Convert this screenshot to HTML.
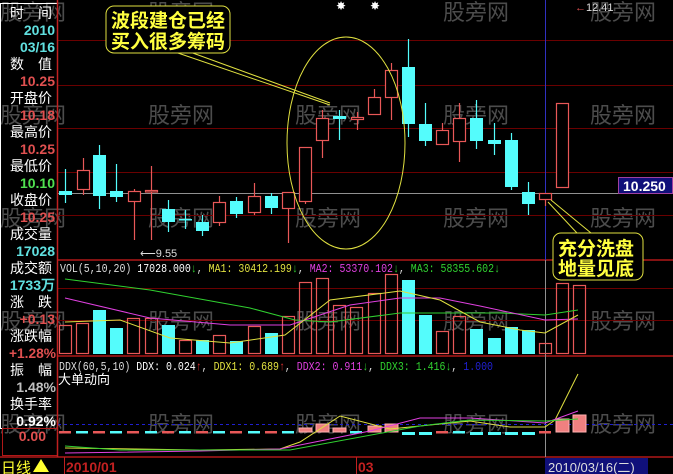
<!DOCTYPE html>
<html><head><meta charset="utf-8"><style>
html,body{margin:0;padding:0;background:#000;width:673px;height:474px;overflow:hidden}
svg{display:block}
.lab{font-family:"Liberation Sans","Noto Sans CJK SC",sans-serif;font-size:14px;fill:#fff}
.num{font-family:"Liberation Sans",sans-serif;font-size:14px;font-weight:bold;text-anchor:end}
.wm{font-family:"Noto Sans CJK SC",sans-serif;font-size:22px;fill:#5a5a5a;opacity:.85}
.mono{font-family:"Liberation Mono",monospace;font-size:12px}
.bb{font-family:"Noto Sans CJK SC",sans-serif;font-size:19px;font-weight:bold;fill:#ffff40}
</style></head><body>
<svg width="673" height="474" viewBox="0 0 673 474" xmlns="http://www.w3.org/2000/svg">
<rect width="673" height="474" fill="#000"/>
<g class="wm">
<text x="0" y="20">股旁网</text><text x="148" y="20">股旁网</text><text x="443" y="20">股旁网</text><text x="590" y="20">股旁网</text>
<text x="0" y="123">股旁网</text><text x="148" y="123">股旁网</text><text x="295" y="123">股旁网</text><text x="443" y="123">股旁网</text><text x="590" y="123">股旁网</text>
<text x="0" y="226">股旁网</text><text x="148" y="226">股旁网</text><text x="295" y="226">股旁网</text><text x="443" y="226">股旁网</text><text x="590" y="226">股旁网</text>
<text x="0" y="329">股旁网</text><text x="148" y="329">股旁网</text><text x="295" y="329">股旁网</text><text x="443" y="329">股旁网</text><text x="590" y="329">股旁网</text>
<text x="0" y="432">股旁网</text><text x="148" y="432">股旁网</text><text x="295" y="432">股旁网</text><text x="443" y="432">股旁网</text><text x="590" y="432">股旁网</text>
</g>
<g stroke="#6a0000" stroke-width="1">
<line x1="58" y1="40.5" x2="673" y2="40.5"/><line x1="58" y1="85.5" x2="673" y2="85.5"/>
<line x1="58" y1="128.5" x2="673" y2="128.5"/><line x1="58" y1="172.5" x2="673" y2="172.5"/>
<line x1="58" y1="215.5" x2="673" y2="215.5"/>
<line x1="58" y1="288.5" x2="673" y2="288.5"/>
<line x1="58" y1="320.5" x2="673" y2="320.5"/>
</g>
<g stroke="#b01818" stroke-width="1.5">
<line x1="58" y1="260" x2="673" y2="260"/><line x1="58" y1="356" x2="673" y2="356"/>
<line x1="0" y1="457" x2="673" y2="457"/>
</g>
<line x1="58" y1="193.5" x2="673" y2="193.5" stroke="#909090"/>
<line x1="545.5" y1="0" x2="545.5" y2="260" stroke="#3030c0"/>
<line x1="545.5" y1="260" x2="545.5" y2="457" stroke="#909090"/>
<line x1="58" y1="424.5" x2="673" y2="424.5" stroke="#2020d0" stroke-dasharray="3,3"/>
<rect x="0.5" y="3.5" width="57" height="425" fill="none" stroke="#fff"/>
<rect x="2.5" y="428.5" width="55" height="27" fill="none" stroke="#b01818"/>
<line x1="57.5" y1="0" x2="57.5" y2="457" stroke="#c02020" stroke-width="1.5"/>
<g class="lab">
<text x="10" y="18">时　间</text><text x="10" y="69">数　值</text><text x="10" y="103">开盘价</text>
<text x="10" y="137">最高价</text><text x="10" y="171">最低价</text><text x="10" y="205">收盘价</text>
<text x="10" y="239">成交量</text><text x="10" y="273">成交额</text><text x="10" y="307">涨　跌</text>
<text x="10" y="341">涨跌幅</text><text x="10" y="375">振　幅</text><text x="10" y="409">换手率</text>
</g>
<g class="num">
<text x="55" y="35" fill="#60e0e0">2010</text><text x="55" y="52" fill="#60e0e0">03/16</text>
<text x="55" y="86" fill="#e05050">10.25</text><text x="55" y="120" fill="#e05050">10.18</text>
<text x="55" y="154" fill="#e05050">10.25</text><text x="55" y="188" fill="#50e050">10.10</text>
<text x="55" y="222" fill="#e05050">10.25</text><text x="55" y="256" fill="#60e0e0">17028</text>
<text x="55" y="290" fill="#60e0e0">1733万</text><text x="55" y="324" fill="#e05050">+0.13</text>
<text x="56" y="358" fill="#e05050" textLength="47" lengthAdjust="spacingAndGlyphs">+1.28%</text><text x="56" y="392" fill="#c0c0c0">1.48%</text>
<text x="56" y="426" fill="#fff">0.92%</text><text x="46" y="441" fill="#e05050">0.00</text>
</g>
<g id="c" stroke-width="1.2"></g>
<g id="v" stroke-width="1.2"></g>
<polyline fill="none" stroke="#30d030" points="65,279 150,290 250,308 295,320 330,322 400,313 500,313 545,315 578,310"/>
<polyline fill="none" stroke="#e040e0" points="65,298 150,318 230,325 290,325 350,305 400,298 440,298 480,306 545,320 578,319"/>
<polyline fill="none" stroke="#e0e040" points="65,322 120,320 170,338 230,343 285,335 330,300 400,291 440,300 480,322 520,330 545,333 578,315"/>
<g id="d"></g>
<polyline fill="none" stroke="#e0e040" points="65,448 200,450 280,449 300,442 340,416 390,429 470,421 510,427 545,427 555,420 578,374"/>
<polyline fill="none" stroke="#e040e0" points="65,453 200,451 280,449 370,431 420,418 470,418 545,423 578,411"/>
<polyline fill="none" stroke="#30d030" points="65,446 120,450 290,450 420,426 470,420 545,421 578,419"/>
<text class="mono" x="60" y="272" fill="#ddd" textLength="440" lengthAdjust="spacingAndGlyphs">VOL(5,10,20) <tspan fill="#fff">17028.000</tspan><tspan fill="#30d030">↓</tspan>, <tspan fill="#e0e040">MA1: 30412.199</tspan><tspan fill="#30d030">↓</tspan>, <tspan fill="#e040e0">MA2: 53370.102</tspan><tspan fill="#30d030">↓</tspan>, <tspan fill="#30d030">MA3: 58355.602↓</tspan></text>
<text class="mono" x="59" y="370" fill="#ddd" textLength="434" lengthAdjust="spacingAndGlyphs">DDX(60,5,10) <tspan fill="#fff">DDX: 0.024</tspan><tspan fill="#e03030">↑</tspan>, <tspan fill="#e0e040">DDX1: 0.689</tspan><tspan fill="#e03030">↑</tspan>, <tspan fill="#e040e0">DDX2: 0.911</tspan><tspan fill="#30d030">↓</tspan>, <tspan fill="#30d030">DDX3: 1.416↓</tspan>, <tspan fill="#2020d0">1.000</tspan></text>
<text x="58" y="384" fill="#fff" style="font-family:'Noto Sans CJK SC',sans-serif;font-size:13px">大单动向</text>
<text x="140" y="257" fill="#ddd" style="font-family:'Liberation Sans',sans-serif;font-size:11px">⟵9.55</text>
<text x="575" y="11" fill="#ddd" style="font-family:'Liberation Sans',sans-serif;font-size:11px"><tspan fill="#e05050">←</tspan>12.41</text>
<text x="336" y="10" fill="#fff" font-size="12">✸</text><text x="370" y="10" fill="#fff" font-size="12">✸</text>
<rect x="618.5" y="177.5" width="54" height="16" fill="#10107a" stroke="#a040a0"/>
<text x="623" y="191" fill="#fff" style="font-family:'Liberation Sans',sans-serif;font-size:14px;font-weight:bold">10.250</text>
<text x="1" y="473" fill="#ffff30" style="font-family:'Noto Sans CJK SC',sans-serif;font-size:15px">日线</text>
<polygon points="33,472 41,459 49,472" fill="#ffff30"/>
<line x1="64.5" y1="457" x2="64.5" y2="474" stroke="#c02020"/>
<text x="66" y="472" fill="#c02020" style="font-family:'Liberation Sans',sans-serif;font-size:14px;font-weight:bold">2010/01</text>
<line x1="356.5" y1="457" x2="356.5" y2="474" stroke="#c02020"/>
<text x="358" y="472" fill="#c02020" style="font-family:'Liberation Sans',sans-serif;font-size:14px;font-weight:bold">03</text>
<rect x="545" y="458" width="103" height="16" fill="#10107a"/>
<text x="548" y="472" fill="#ddd" style="font-family:'Liberation Sans','Noto Sans CJK SC',sans-serif;font-size:13px">2010/03/16(二)</text>
<ellipse cx="346" cy="143" rx="59" ry="106" fill="none" stroke="#e0e040"/>
<polyline fill="none" stroke="#e0e040" points="175,52 330,105"/><polyline fill="none" stroke="#e0e040" points="190,52 330,103"/>
<rect x="106" y="6" width="124" height="47" rx="8" fill="#000" stroke="#e0e040"/>
<text class="bb" x="111" y="27">波段建仓已经</text><text class="bb" x="111" y="48">买入很多筹码</text>
<polyline fill="none" stroke="#e0e040" points="548,202 577,233"/><polyline fill="none" stroke="#e0e040" points="551,200 591,233"/>
<rect x="553" y="233" width="90" height="47" rx="8" fill="#000" stroke="#e0e040"/>
<text class="bb" x="558" y="255">充分洗盘</text><text class="bb" x="558" y="275">地量见底</text>
</svg>
<script>
var NS="http://www.w3.org/2000/svg",R="#e85858",C="#54fcfc";
function el(p,t,a){var e=document.createElementNS(NS,t);for(var k in a)e.setAttribute(k,a[k]);p.appendChild(e);}
var cs=[[59,191,195,169,203,"c"],[77,170,189,158,195,"r"],[93,155,196,145,209,"c"],[110,191,197,164,202,"c"],[128,191,201,189,240,"r"],[145,190,191,166,240,"r"],[162,209,222,200,232,"c"],[179,219,220,210,229,"c"],[196,222,231,215,236,"c"],[213,202,222,196,226,"r"],[230,201,214,197,218,"c"],[248,196,212,183,215,"r"],[265,196,208,193,214,"c"],[282,192,208,192,243,"r"],[299,147,201,147,204,"r"],[316,118,140,110,158,"r"],[333,116,119,110,140,"c"],[351,117,119,112,130,"r"],[368,97,114,89,114,"r"],[385,70,97,63,120,"r"],[402,67,124,39,137,"c"],[419,124,141,103,146,"c"],[436,130,144,123,144,"r"],[453,118,141,103,162,"r"],[470,118,141,100,149,"c"],[488,140,144,123,155,"c"],[505,140,187,133,190,"c"],[522,192,204,182,215,"c"],[539,193,199,193,206,"r"],[556,103,187,103,187,"r"]];
var g=document.getElementById("c");
cs.forEach(function(c){var col=c[5]=="r"?R:C,cx=c[0]+6.5;
el(g,"line",{x1:cx,y1:c[3],x2:cx,y2:c[4],stroke:col});
var h=Math.max(c[2]-c[1],1.5);
if(c[5]=="r")el(g,"rect",{x:c[0]+.5,y:c[1]+.5,width:12,height:h,fill:"#000",stroke:col});
else el(g,"rect",{x:c[0],y:c[1],width:13,height:h,fill:col});});
var vl=[59,76,93,110,127,145,162,179,196,213,230,248,265,282,299,316,333,350,368,385,402,419,436,453,470,488,505,522,539,556,573];
var vt=[325,323,310,328,318,318,325,340,340,335,341,326,333,316,282,278,305,307,293,274,280,315,331,316,329,338,327,330,343,283,285];
var vc="rrccrrcrcrcrcrrrrrrrccrrccccrrr";
var v=document.getElementById("v");
vl.forEach(function(x,i){if(vc[i]=="r")el(v,"rect",{x:x+.5,y:vt[i]+.5,width:12,height:353-vt[i],fill:"none",stroke:R});
else el(v,"rect",{x:x,y:vt[i],width:13,height:354-vt[i],fill:C});});
var d=document.getElementById("d");
var pos={299:[428,"p"],316:[424,"p"],333:[428,"p"],368:[426,"p"],385:[424,"p"],556:[419,"p"],573:[415,"p"]};
var cyd={402:1,419:1,470:1,488:1,505:1,522:1};
vl.forEach(function(x,i){if(pos[x]){el(d,"rect",{x:x,y:pos[x][0],width:13,height:432-pos[x][0],fill:"#f08080",stroke:"#ffb0b0"});}
else if(cyd[x]){el(d,"rect",{x:x,y:432,width:13,height:3,fill:C});}
else el(d,"rect",{x:x,y:431,width:12,height:2.5,fill:i%2?C:R});});
</script>
</body></html>
